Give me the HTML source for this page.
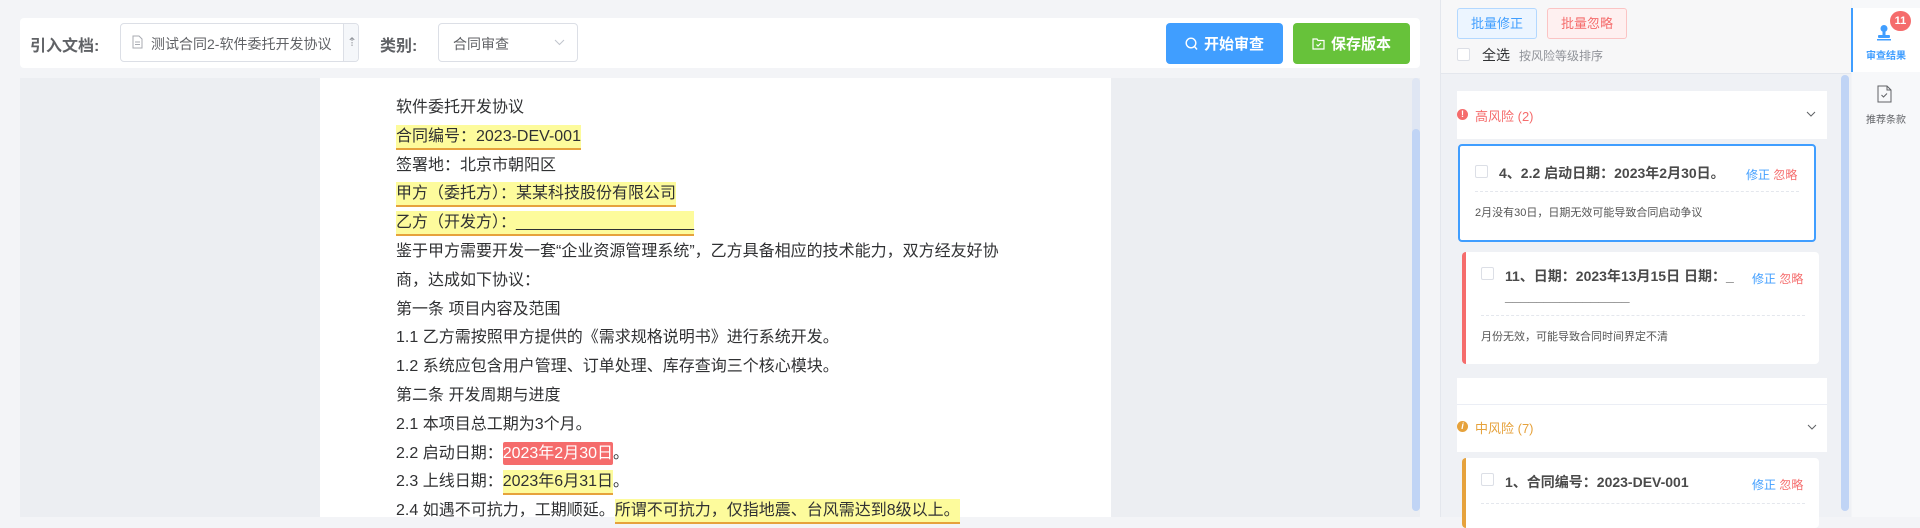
<!DOCTYPE html>
<html><head><meta charset="utf-8"><style>
*{margin:0;padding:0;box-sizing:border-box}
body{width:1920px;height:517px;overflow:hidden;background:#f3f4f7;font-family:"Liberation Sans","Noto Sans CJK SC",sans-serif;color:#303133;position:relative}
.abs{position:absolute}
.tb{left:20px;top:18px;width:1400px;height:50px;background:#fff;border-radius:4px}
.lbl{font-size:16px;color:#606266;font-weight:bold}
.inp{border:1px solid #dcdfe6;border-radius:4px;background:#fff;font-size:14px;color:#606266}
.btn{border-radius:4px;color:#fff;font-size:15px;font-weight:bold;display:flex;align-items:center;justify-content:center;gap:6px}
.doc{left:20px;top:78px;width:1400px;height:439px;background:#eceef2}
.page{left:320px;top:78px;width:791px;height:439px;background:#fff}
.txt{position:absolute;left:396px;top:94px;width:626px;font-size:16px;line-height:28.8px;color:#303133}
.y{background:#fdfb9c;border-bottom:2px solid #e6a23c;padding:3px 0}
.r{background:#f56c6c;color:#fff;padding:3px 0;border-radius:2px}
.rp{left:1440px;top:0;width:411px;height:517px;background:#eff1f5;border-left:1px solid #e4e7ed}
.rh{left:1441px;top:0;width:410px;height:74px;background:#f7f7f8;border-bottom:1px solid #e4e7ed}
.sb{left:1852px;top:0;width:68px;height:517px;background:#f7f8fa}
.card{background:#fff;border-radius:4px}
.cb{width:13px;height:13px;border:1px solid #dcdfe6;border-radius:2px;background:#fff;position:absolute}
.ct{position:absolute;font-size:14px;font-weight:bold;color:#4a4a4a}
.acts{position:absolute;font-size:12px}
.acts b{font-weight:normal}
.div{position:absolute;border-top:1px dashed #e4e7ed}
.desc{position:absolute;font-size:11px;color:#555}
</style></head><body>
<div class="abs tb"></div>
<div class="abs lbl" style="left:30px;top:32px">引入文档:</div>
<div class="abs inp" style="left:120px;top:23px;width:239px;height:39px;overflow:hidden">
 <svg class="abs" style="left:11px;top:11px" width="11" height="14" viewBox="0 0 11 14"><path d="M1 1h6l3 3v9H1z" fill="none" stroke="#a8abb2"/><path d="M3 7h5M3 9.5h5" stroke="#a8abb2"/></svg>
 <span class="abs" style="left:30px;top:10px;white-space:nowrap;width:188px;overflow:hidden">测试合同2-软件委托开发协议</span>
 <div class="abs" style="left:222px;top:0;width:17px;height:39px;background:#f5f7fa;border-left:1px solid #dcdfe6;color:#909399;font-size:12px;text-align:center;line-height:37px">⇡</div>
</div>
<div class="abs lbl" style="left:380px;top:32px">类别:</div>
<div class="abs inp" style="left:438px;top:23px;width:140px;height:39px">
 <span class="abs" style="left:14px;top:10px">合同审查</span>
 <svg class="abs" style="left:115px;top:15px" width="11" height="7" viewBox="0 0 11 7"><path d="M1 1l4.5 4.5L10 1" fill="none" stroke="#c0c4cc"/></svg>
</div>
<div class="abs btn" style="left:1166px;top:23px;width:117px;height:41px;background:#409eff"><svg width="13" height="14" viewBox="0 0 13 14"><circle cx="6" cy="6" r="4.8" fill="none" stroke="#fff" stroke-width="1.4"/><path d="M9.5 9.5l2.5 3" stroke="#fff" stroke-width="1.4"/></svg>开始审查</div>
<div class="abs btn" style="left:1293px;top:23px;width:117px;height:41px;background:#67c23a"><svg width="13" height="13" viewBox="0 0 13 13"><path d="M1 2h4l1 1.5h6V12H1z" fill="none" stroke="#fff" stroke-width="1.2"/><path d="M4.5 7.5l1.5 1.5 3-3" fill="none" stroke="#fff" stroke-width="1.2"/></svg>保存版本</div>

<div class="abs doc"></div>
<div class="abs page"></div>
<div class="txt">
<div>软件委托开发协议</div>
<div><span class="y">合同编号：2023-DEV-001</span></div>
<div>签署地：北京市朝阳区</div>
<div><span class="y">甲方（委托方）：某某科技股份有限公司</span></div>
<div><span class="y">乙方（开发方）：____________________</span></div>
<div>鉴于甲方需要开发一套“企业资源管理系统”，乙方具备相应的技术能力，双方经友好协<br>商，达成如下协议：</div>
<div>第一条 项目内容及范围</div>
<div>1.1 乙方需按照甲方提供的《需求规格说明书》进行系统开发。</div>
<div>1.2 系统应包含用户管理、订单处理、库存查询三个核心模块。</div>
<div>第二条 开发周期与进度</div>
<div>2.1 本项目总工期为3个月。</div>
<div>2.2 启动日期：<span class="r">2023年2月30日</span>。</div>
<div>2.3 上线日期：<span class="y">2023年6月31日</span>。</div>
<div style="white-space:nowrap">2.4 如遇不可抗力，工期顺延。<span class="y">所谓不可抗力，仅指地震、台风需达到8级以上。</span></div>
</div>
<div class="abs" style="left:1412px;top:78px;width:8px;height:433px;background:#dfe6f3;border-radius:4px"></div>
<div class="abs" style="left:1412px;top:129px;width:8px;height:382px;background:#c0d4f5;border-radius:4px"></div>

<div class="abs rp"></div>
<div class="abs rh"></div>
<div class="abs" style="left:1457px;top:8px;width:80px;height:31px;border:1px solid #b3d8ff;background:#ecf5ff;color:#409eff;font-size:13px;text-align:center;line-height:29px;border-radius:3px">批量修正</div>
<div class="abs" style="left:1547px;top:8px;width:80px;height:31px;border:1px solid #fbc4c4;background:#fef0f0;color:#f56c6c;font-size:13px;text-align:center;line-height:29px;border-radius:3px">批量忽略</div>
<div class="cb" style="left:1457px;top:48px"></div>
<div class="abs" style="left:1482px;top:45px;font-size:14px;color:#303133">全选</div>
<div class="abs" style="left:1519px;top:47px;font-size:12px;color:#909399">按风险等级排序</div>

<div class="abs card" style="left:1457px;top:91px;width:370px;height:48px;border-radius:0"></div>
<div class="abs" style="left:1457px;top:109px;width:11px;height:11px;border-radius:50%;background:#f56c6c;color:#fff;font-size:9px;text-align:center;line-height:11px;font-weight:bold">!</div>
<div class="abs" style="left:1475px;top:106px;font-size:13px;color:#f56c6c">高风险 (2)</div>
<svg class="abs" style="left:1806px;top:111px" width="10" height="6" viewBox="0 0 10 6"><path d="M1 1l4 4 4-4" fill="none" stroke="#606266"/></svg>

<div class="abs card" style="left:1458px;top:144px;width:358px;height:98px;border:2px solid #409eff"></div>
<div class="cb" style="left:1475px;top:165px"></div>
<div class="ct" style="left:1499px;top:163px">4、2.2 启动日期：2023年2月30日。</div>
<div class="acts" style="left:1746px;top:166px"><b style="color:#409eff">修正</b> <b style="color:#f56c6c">忽略</b></div>
<div class="div" style="left:1475px;top:191px;width:324px"></div>
<div class="desc" style="left:1475px;top:204px">2月没有30日，日期无效可能导致合同启动争议</div>

<div class="abs card" style="left:1462px;top:252px;width:357px;height:112px;border-left:4px solid #f56c6c"></div>
<div class="cb" style="left:1481px;top:267px"></div>
<div class="ct" style="left:1505px;top:266px">11、日期：2023年13月15日 日期：_</div>
<div class="ct" style="left:1505px;top:288px">________________</div>
<div class="acts" style="left:1752px;top:270px"><b style="color:#409eff">修正</b> <b style="color:#f56c6c">忽略</b></div>
<div class="div" style="left:1481px;top:315px;width:324px"></div>
<div class="desc" style="left:1481px;top:328px">月份无效，可能导致合同时间界定不清</div>

<div class="abs card" style="left:1457px;top:378px;width:370px;height:74px;border-radius:0"></div>
<div class="abs" style="left:1457px;top:404px;width:370px;border-top:1px solid #ebeef5"></div>
<div class="abs" style="left:1457px;top:421px;width:11px;height:11px;border-radius:50%;background:#e6a23c;color:#fff;font-size:9px;text-align:center;line-height:11px;font-style:italic;font-weight:bold">i</div>
<div class="abs" style="left:1475px;top:418px;font-size:13px;color:#e6a23c">中风险 (7)</div>
<svg class="abs" style="left:1807px;top:424px" width="10" height="6" viewBox="0 0 10 6"><path d="M1 1l4 4 4-4" fill="none" stroke="#606266"/></svg>

<div class="abs card" style="left:1462px;top:458px;width:357px;height:70px;border-left:4px solid #e6a23c"></div>
<div class="cb" style="left:1481px;top:473px"></div>
<div class="ct" style="left:1505px;top:472px">1、合同编号：2023-DEV-001</div>
<div class="acts" style="left:1752px;top:476px"><b style="color:#409eff">修正</b> <b style="color:#f56c6c">忽略</b></div>
<div class="div" style="left:1481px;top:503px;width:324px"></div>

<div class="abs" style="left:1841px;top:75px;width:8px;height:436px;background:#c0d4f5;border-radius:4px"></div>

<div class="abs sb"></div>
<div class="abs" style="left:1852px;top:8px;width:68px;height:64px;background:#fff"></div>
<div class="abs" style="left:1851px;top:8px;width:2px;height:64px;background:#409eff"></div>
<svg class="abs" style="left:1876px;top:24px" width="16" height="17" viewBox="0 0 16 17"><circle cx="8" cy="4.5" r="3.5" fill="#409eff"/><rect x="6.5" y="7" width="3" height="4" fill="#409eff"/><rect x="2" y="11" width="12" height="3" rx="1" fill="#409eff"/><rect x="1" y="15" width="14" height="1.5" fill="#409eff"/></svg>
<div class="abs" style="left:1890px;top:11px;width:21px;height:20px;border-radius:10px;background:#f56c6c;color:#fff;font-size:11px;font-weight:bold;text-align:center;line-height:20px">11</div>
<div class="abs" style="left:1852px;top:47px;width:68px;text-align:center;font-size:10px;font-weight:bold;color:#409eff">审查结果</div>
<svg class="abs" style="left:1877px;top:85px" width="15" height="18" viewBox="0 0 15 18"><path d="M1 1h9l4 4v12H1z" fill="none" stroke="#606266"/><path d="M10 1v4h4" fill="none" stroke="#606266"/><path d="M4.5 10l2 2 3.5-3.5" fill="none" stroke="#606266"/></svg>
<div class="abs" style="left:1852px;top:111px;width:68px;text-align:center;font-size:10px;color:#606266">推荐条款</div>
</body></html>
